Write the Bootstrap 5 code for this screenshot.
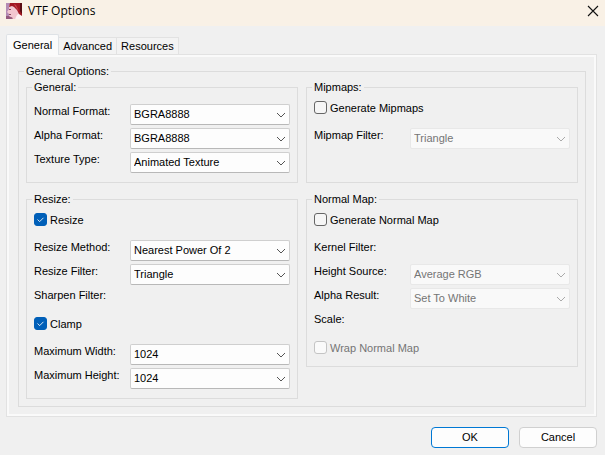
<!DOCTYPE html>
<html lang="en">
<head>
<meta charset="utf-8">
<meta name="viewport" content="width=device-width, initial-scale=1">
<title>VTF Options</title>
<link href="https://cdn.jsdelivr.net/npm/bootstrap@5.3.0/dist/css/bootstrap.min.css" rel="stylesheet">
<style>
  body { background: #f0f0f0; color: #000; font: 11px/16px "Liberation Sans", Arial, sans-serif; }
  .titlebar { background: #f9f1e6; height: 26px; padding: 0 6px 4px 6px; gap: 6px; font: 12px/16px "Open Sans", "Segoe UI", sans-serif; }
  .titlebar h1 { font: inherit; }
  .close-btn { width: 12px; height: 12px; }
  main { padding: 8px 8px 8px 6px; }
  .dialog-tabs { border: 0; height: 21px; margin-bottom: -1px; position: relative; }
  .dialog-tabs .nav-link { border: 1px solid #e2e2e2; border-left-width: 0; border-radius: 0; background: #f3f3f3; color: #000; margin: 0; padding: 0 4px; height: 18px; line-height: 17px; }
  .dialog-tabs .nav-link.active { background: #fbfbfb; border-left-width: 1px; border-bottom: 0; height: 21px; padding: 0 6px; line-height: 19px; color: #000; border-radius: 2px 2px 0 0; }
  .sheet { border: 1px solid #e2e2e2; box-shadow: inset 0 0 0 2px #fafafa; padding: 8px 10px 9px 11px; }
  fieldset { border: 1px solid #dcdcdc; }
  legend { float: none; width: auto; margin: 0; padding: 0 2px; font-size: 11px; line-height: 16px; }
  .outer-group { padding: 0 7px 7px; }
  .outer-group > legend { margin-left: -2px; }
  .group { padding: 9px 7px 6px; }
  .group > legend { margin-left: -2px; }
  .group.with-check { padding-top: 6px; }
  .group.normal-map { padding-bottom: 11px; }
  .columns { gap: 8px; }
  .column { min-width: 0; flex: 1 1 0; }
  .option { height: 24px; }
  .option label, .option span { flex: 0 0 96px; line-height: 14px; }
  .option .form-select { height: 21px; min-width: 0; padding: 0 18px 0 3px; font-size: 11px; line-height: 19px; color: #000; border: 1px solid #cfcfcf; border-bottom-color: #b8b8b8; border-radius: 2px; background-color: #fdfdfd;
    background-image: url("data:image/svg+xml,%3Csvg xmlns='http://www.w3.org/2000/svg' viewBox='0 0 10 6'%3E%3Cpath d='M1 1l4 4 4-4' fill='none' stroke='%23555'/%3E%3C/svg%3E"); background-size: 10px 6px; background-position: right 3px center; }
  .option .form-select:disabled { color: #757575; background-color: #f9f9f9; border-color: #e8e8e8; opacity: 1;
    background-image: url("data:image/svg+xml,%3Csvg xmlns='http://www.w3.org/2000/svg' viewBox='0 0 10 6'%3E%3Cpath d='M1 1l4 4 4-4' fill='none' stroke='%23aaa'/%3E%3C/svg%3E"); }
  .tick { height: 14px; min-height: 0; margin: 0 0 13px; padding: 0; gap: 3px; line-height: 14px; }
  .tick.later { margin-top: 5px; }
  .tick.final { margin-bottom: 0; }
  .tick .form-check-input { float: none; width: 13px; height: 13px; margin: 0; border: 1px solid #666; border-radius: 3px; background-color: #f6f6f6; }
  .tick .form-check-input:checked { background-color: #005fb8; border-color: #005fb8;
    background-image: url("data:image/svg+xml,%3Csvg xmlns='http://www.w3.org/2000/svg' viewBox='0 0 13 13'%3E%3Cpath d='M3 6.5l2.500 2.500L10 4.500' fill='none' stroke='%23fff'/%3E%3C/svg%3E"); }
  .tick .form-check-input:disabled { border-color: #c4c4c4; background-color: #fafafa; opacity: 1; }
  .tick .form-check-input:disabled ~ label { color: #757575; opacity: 1; }
  .actions { gap: 10px; padding-top: 10px; }
  .actions .btn { width: 78px; height: 21px; padding: 0; font-size: 11px; line-height: 19px; color: #000; background: #fdfdfd; border: 1px solid #d0d0d0; border-radius: 4px; }
  .actions .btn.default { border-color: #0078d4; }
</style>
</head>
<body>
<header class="titlebar d-flex align-items-center">
  <svg width="16" height="16" viewBox="0 0 16 16" aria-hidden="true">
    <path fill="#b48bb4" d="M0 0h16v16H0z"/>
    <path fill="#f2c6cf" d="M3 2h6l5 8-2 4-3 2H6l-1-2-2-1 0-2-2-2 2-3z"/>
    <path fill="#fdf3f3" d="M11 12l3-2 2 2v4H9z"/>
    <path fill="#7e3a5a" d="M0 13l3 0 1 1h2l1 2H0z" opacity=".6"/>
    <path fill="#a01822" d="M4 0h12v13l-3-2-2-4-3-3-2-1-3 1z"/>
    <path fill="#5a0c14" d="M14 0h2v11l-2-3z"/>
    <path fill="#c8404a" d="M8 1l2 1 3 6-2-2-2-3z"/>
    <path fill="#8a4a60" d="M3 6h2v1H3zM3 11h2v1H3z"/>
  </svg>
  <h1 class="m-0 flex-grow-1">VTF Options</h1>
  <button type="button" class="close-btn btn p-0 border-0 d-flex" aria-label="Close">
    <svg width="12" height="12" viewBox="0 0 12 12"><path d="M1 1l10 10M11 1L1 11" fill="none" stroke="#111" stroke-width="1.1"/></svg>
  </button>
</header>
<main>
  <div class="nav nav-tabs dialog-tabs align-items-end" role="tablist">
    <button type="button" class="nav-link active" role="tab" aria-selected="true">General</button>
    <button type="button" class="nav-link" role="tab" aria-selected="false">Advanced</button>
    <button type="button" class="nav-link" role="tab" aria-selected="false">Resources</button>
  </div>
  <section class="sheet">
    <fieldset class="outer-group">
      <legend>General Options:</legend>
      <div class="columns d-flex flex-column">
        <div class="columns d-flex">
          <fieldset class="group column">
            <legend>General:</legend>
            <div class="option d-flex align-items-start"><label for="nf">Normal Format:</label><select id="nf" class="form-select"><option>BGRA8888</option></select></div>
            <div class="option d-flex align-items-start"><label for="af">Alpha Format:</label><select id="af" class="form-select"><option>BGRA8888</option></select></div>
            <div class="option d-flex align-items-start"><label for="tt">Texture Type:</label><select id="tt" class="form-select"><option>Animated Texture</option></select></div>
          </fieldset>
          <fieldset class="group with-check column">
            <legend>Mipmaps:</legend>
            <div class="tick form-check d-flex"><input id="gm" type="checkbox" class="form-check-input"><label for="gm">Generate Mipmaps</label></div>
            <div class="option d-flex align-items-start"><label for="mf">Mipmap Filter:</label><select id="mf" class="form-select" disabled><option>Triangle</option></select></div>
          </fieldset>
        </div>
        <div class="columns d-flex align-items-start">
          <fieldset class="group with-check column">
            <legend>Resize:</legend>
            <div class="tick form-check d-flex"><input id="rs" type="checkbox" class="form-check-input" checked><label for="rs">Resize</label></div>
            <div class="option d-flex align-items-start"><label for="rm">Resize Method:</label><select id="rm" class="form-select"><option>Nearest Power Of 2</option></select></div>
            <div class="option d-flex align-items-start"><label for="rf">Resize Filter:</label><select id="rf" class="form-select"><option>Triangle</option></select></div>
            <div class="option d-flex align-items-start"><span>Sharpen Filter:</span></div>
            <div class="tick later form-check d-flex"><input id="cl" type="checkbox" class="form-check-input" checked><label for="cl">Clamp</label></div>
            <div class="option d-flex align-items-start"><label for="mw">Maximum Width:</label><select id="mw" class="form-select"><option>1024</option></select></div>
            <div class="option d-flex align-items-start"><label for="mh">Maximum Height:</label><select id="mh" class="form-select"><option>1024</option></select></div>
          </fieldset>
          <fieldset class="group with-check normal-map column">
            <legend>Normal Map:</legend>
            <div class="tick form-check d-flex"><input id="gn" type="checkbox" class="form-check-input"><label for="gn">Generate Normal Map</label></div>
            <div class="option d-flex align-items-start"><span>Kernel Filter:</span></div>
            <div class="option d-flex align-items-start"><label for="hs">Height Source:</label><select id="hs" class="form-select" disabled><option>Average RGB</option></select></div>
            <div class="option d-flex align-items-start"><label for="ar">Alpha Result:</label><select id="ar" class="form-select" disabled><option>Set To White</option></select></div>
            <div class="option d-flex align-items-start"><span>Scale:</span></div>
            <div class="tick later final form-check d-flex"><input id="wn" type="checkbox" class="form-check-input" disabled><label for="wn">Wrap Normal Map</label></div>
          </fieldset>
        </div>
      </div>
    </fieldset>
  </section>
  <div class="actions d-flex justify-content-end">
    <button type="button" class="btn default">OK</button>
    <button type="button" class="btn">Cancel</button>
  </div>
</main>
<script src="https://cdn.jsdelivr.net/npm/bootstrap@5.3.0/dist/js/bootstrap.bundle.min.js"></script>
</body>
</html>
